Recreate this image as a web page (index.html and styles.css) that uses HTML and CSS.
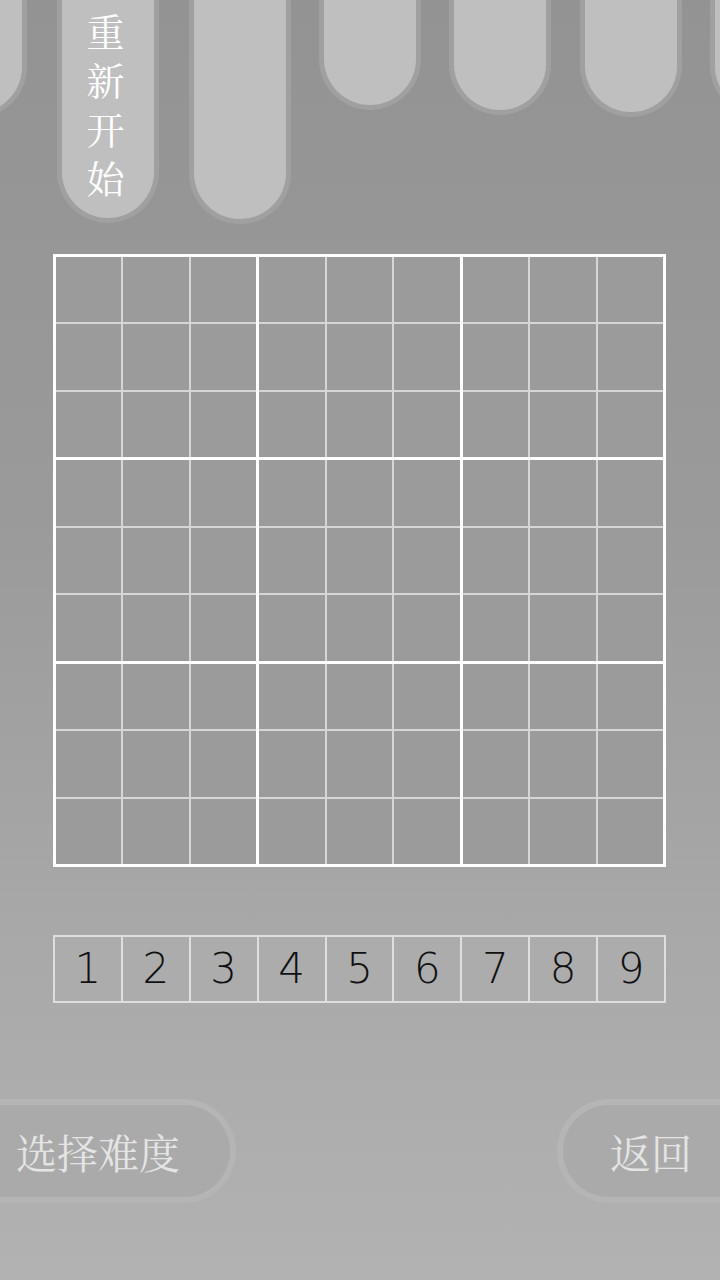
FILE: index.html
```html
<!DOCTYPE html>
<html lang="zh">
<head>
<meta charset="utf-8">
<title>数独</title>
<link rel="stylesheet" href="styles.css">
</head>
<body>
<div class="screen">
  <div class="tabs">
    <div class="tab t1"></div>
    <div class="tab t2"><span class="vtext">重新开始</span></div>
    <div class="tab t3"></div>
    <div class="tab t4"></div>
    <div class="tab t5"></div>
    <div class="tab t6"></div>
    <div class="tab t7"></div>
  </div>

  <div class="board">
    <div class="box"><i></i><i></i><i></i><i></i><i></i><i></i><i></i><i></i><i></i></div>
    <div class="box"><i></i><i></i><i></i><i></i><i></i><i></i><i></i><i></i><i></i></div>
    <div class="box"><i></i><i></i><i></i><i></i><i></i><i></i><i></i><i></i><i></i></div>
    <div class="box"><i></i><i></i><i></i><i></i><i></i><i></i><i></i><i></i><i></i></div>
    <div class="box"><i></i><i></i><i></i><i></i><i></i><i></i><i></i><i></i><i></i></div>
    <div class="box"><i></i><i></i><i></i><i></i><i></i><i></i><i></i><i></i><i></i></div>
    <div class="box"><i></i><i></i><i></i><i></i><i></i><i></i><i></i><i></i><i></i></div>
    <div class="box"><i></i><i></i><i></i><i></i><i></i><i></i><i></i><i></i><i></i></div>
    <div class="box"><i></i><i></i><i></i><i></i><i></i><i></i><i></i><i></i><i></i></div>
  </div>

  <div class="numbers">
    <div class="num">1</div><div class="num">2</div><div class="num">3</div>
    <div class="num">4</div><div class="num">5</div><div class="num">6</div>
    <div class="num">7</div><div class="num">8</div><div class="num">9</div>
  </div>

  <div class="actions">
    <div class="pill left"><span>选择难度</span></div>
    <div class="pill right"><span>返回</span></div>
  </div>
</div>
</body>
</html>
```

FILE: styles.css
```css
html, body {
  margin: 0;
  padding: 0;
}
body {
  width: 720px;
  height: 1280px;
  overflow: hidden;
  background: linear-gradient(to bottom, #939393 0%, #9a9a9a 40%, #a9a9a9 75%, #b2b2b2 100%);
  font-family: "Noto Serif CJK SC", "Noto Sans CJK SC", serif;
}
.screen {
  width: 720px;
  height: 1280px;
  overflow: hidden;
  display: flex;
  flex-direction: column;
}
.tabs {
  height: 254px;
  display: flex;
  align-items: flex-start;
  gap: 28px;
  margin-left: -75px;
  flex-shrink: 0;
}
.tab {
  flex: 0 0 102px;
  box-sizing: border-box;
  width: 102px;
  background: #bfbfbf;
  border: 5px solid #a0a0a0;
  border-top: none;
  border-radius: 0 0 51px 51px;
  display: flex;
  justify-content: center;
}
.t1 { height: 118px; }
.t2 { height: 223px; margin-left: 2px; }
.t3 { height: 224px; margin-left: 2px; }
.t4 { height: 110px; }
.t5 { height: 115px; }
.t6 { height: 117px; margin-left: 1px; }
.t7 { height: 117px; }
.vtext {
  writing-mode: vertical-rl;
  color: #ffffff;
  font-size: 38px;
  letter-spacing: 11px;
  line-height: 38px;
  padding-top: 13px;
  margin-left: -6px;
}
.board {
  width: 613px;
  height: 613px;
  box-sizing: border-box;
  margin-left: 53px;
  padding: 3px;
  background: #ffffff;
  display: grid;
  grid-template-columns: repeat(3, 1fr);
  grid-template-rows: repeat(3, 1fr);
  gap: 3px;
  flex-shrink: 0;
}
.box {
  background: #d6d6d6;
  display: grid;
  grid-template-columns: repeat(3, 1fr);
  grid-template-rows: repeat(3, 1fr);
  gap: 2px;
}
.box i {
  display: block;
  background: #9b9b9b;
}
.numbers {
  margin-top: 68px;
  margin-left: 53px;
  width: 613px;
  height: 68px;
  box-sizing: border-box;
  padding: 2px;
  gap: 2px;
  background: #dedede;
  display: grid;
  grid-template-columns: repeat(9, 1fr);
  flex-shrink: 0;
}
.num {
  background: #acacac;
  color: #111111;
  font-family: "DejaVu Sans", sans-serif;
  font-weight: 200;
  font-size: 42px;
  display: flex;
  align-items: center;
  justify-content: center;
  line-height: 1;
}
.actions {
  margin-top: 96px;
  display: flex;
  justify-content: space-between;
  height: 104px;
}
.pill {
  box-sizing: border-box;
  height: 104px;
  background: #aaaaaa;
  border: 6px solid #b5b5b5;
  display: flex;
  align-items: center;
  color: #e4e4e4;
  font-size: 41px;
  line-height: 1;
}
.pill.left {
  width: 262px;
  margin-left: -26px;
  border-radius: 0 52px 52px 0;
  border-left: none;
  padding-left: 42px;
}
.pill.right {
  width: 190px;
  margin-right: -27px;
  border-radius: 52px 0 0 52px;
  border-right: none;
  padding-left: 47px;
}
```
